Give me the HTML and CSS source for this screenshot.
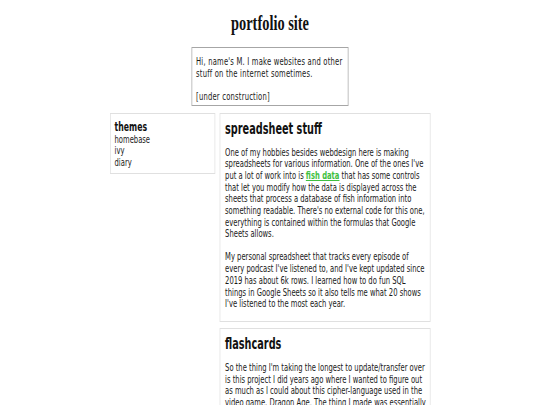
FILE: index.html
```html
<!DOCTYPE html>
<html>
<head>
<meta charset="utf-8">
<link rel="stylesheet" href="styles.css">
</head>
<body>
<div class="page">
  <h1 class="site-title">portfolio site</h1>
  <div class="intro">
    <p>Hi, name's M. I make websites and other stuff on the internet sometimes.</p>
    <p>[under construction]</p>
  </div>
  <div class="layout">
    <aside class="sidebar">
      <h3 class="side-title">themes</h3>
      <ul class="theme-list">
        <li>homebase</li>
        <li>ivy</li>
        <li>diary</li>
      </ul>
    </aside>
    <main class="content">
      <section class="card">
        <h2 class="card-title">spreadsheet stuff</h2>
        <p>One of my hobbies besides webdesign here is making spreadsheets for various information. One of the ones I've put a lot of work into is <a class="link" href="#">fish data</a> that has some controls that let you modify how the data is displayed across the sheets that process a database of fish information into something readable. There's no external code for this one, everything is contained within the formulas that Google Sheets allows.</p>
        <p>My personal spreadsheet that tracks every episode of every podcast I've listened to, and I've kept updated since 2019 has about 6k rows. I learned how to do fun SQL things in Google Sheets so it also tells me what 20 shows I've listened to the most each year.</p>
      </section>
      <section class="card">
        <h2 class="card-title">flashcards</h2>
        <p>So the thing I'm taking the longest to update/transfer over is this project I did years ago where I wanted to figure out as much as I could about this cipher-language used in the video game, Dragon Age. The thing I made was essentially a set of flashcards to learn it.</p>
      </section>
    </main>
  </div>
</div>
</body>
</html>
```
FILE: styles.css
```css
html {
  overflow-x: hidden;
}
html, body {
  margin: 0;
  padding: 0;
  background: #ffffff;
}
body {
  font-family: "DejaVu Sans Condensed", "DejaVu Sans", sans-serif;
  font-size: 10.5px;
  line-height: 11.7px;
  color: #1a1a1a;
}
/* the whole page is drawn horizontally condensed */
.page {
  width: 750px;
  transform: scaleX(0.72);
  transform-origin: 0 0;
}
.site-title {
  margin: 0;
  padding-top: 11px;
  text-align: center;
  font-family: "Liberation Serif", serif;
  font-weight: bold;
  font-size: 20px;
  line-height: 24px;
  color: #111;
}
.intro {
  width: 205.4px;
  margin: 12px auto 0 auto;
  border-style: solid;
  border-color: #a6a6a6;
  border-width: 1px 1.4px;
  padding: 8px 5.6px 3px 5.6px;
  line-height: 11.5px;
  letter-spacing: 0.28px;
}
.intro p {
  margin: 0 0 11.5px 0;
}
.intro p:last-child {
  margin: 0;
}
.layout {
  width: 445px;
  margin: 7px auto 0 auto;
  display: flex;
  gap: 5.6px;
  align-items: flex-start;
}
.sidebar {
  width: 146.5px;
  box-sizing: border-box;
  border-style: solid;
  border-color: #e0e0e0;
  border-width: 1px 1.4px;
  padding: 6px 5.6px 5px 5.6px;
  line-height: 11.3px;
}
.side-title {
  margin: 0;
  font-size: 12px;
  line-height: 14px;
  font-weight: bold;
  color: #111;
}
.theme-list {
  list-style: none;
  margin: 0;
  padding: 0;
}
.content {
  flex: 1;
  display: flex;
  flex-direction: column;
  gap: 6px;
}
.card {
  border-style: solid;
  border-color: #e0e0e0;
  border-width: 1px 1.4px;
  padding: 6px 4px 11.5px 7px;
}
.card-title {
  margin: 0 0 8.5px 0;
  font-size: 15px;
  line-height: 18px;
  font-weight: bold;
  color: #111;
}
.card p {
  margin: 0 0 11.3px 0;
}
.card p:last-child {
  margin-bottom: 0;
}
.link {
  color: #3fbf3f;
  font-weight: bold;
}
```
